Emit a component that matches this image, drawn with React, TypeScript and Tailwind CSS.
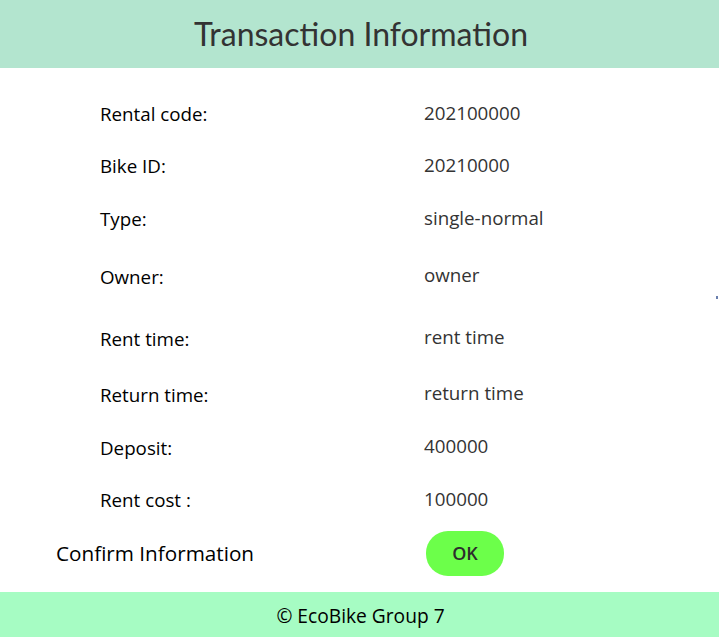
import { memo } from 'react'

interface Row {
  label: string
  value: string
  gap: string
  lift: string
}

const rows: Row[] = [
  { label: 'Rental code:', value: '202100000', gap: 'mt-[34px]', lift: '-mt-[1px]' },
  { label: 'Bike ID:', value: '20210000', gap: 'mt-[28px]', lift: '-mt-[1px]' },
  { label: 'Type:', value: 'single-normal', gap: 'mt-[29px]', lift: '-mt-[1px]' },
  { label: 'Owner:', value: 'owner', gap: 'mt-[34px]', lift: '-mt-[2px]' },
  { label: 'Rent time:', value: 'rent time', gap: 'mt-[38px]', lift: '-mt-[2px]' },
  { label: 'Return time:', value: 'return time', gap: 'mt-[32px]', lift: '-mt-[2px]' },
  { label: 'Deposit:', value: '400000', gap: 'mt-[29px]', lift: '-mt-[2px]' },
  { label: 'Rent cost :', value: '100000', gap: 'mt-[28px]', lift: '-mt-[1px]' },
]

const InfoRow = memo<Row>(({ label, value, gap, lift }) => (
  <div className={`${gap} flex items-start h-6`}>
    <span className="w-[424px] pl-[100px] text-[18.75px] leading-6 text-black">{label}</span>
    <span className={`${lift} text-[18.75px] leading-6 text-[#333333]`}>{value}</span>
  </div>
))

InfoRow.displayName = 'InfoRow'

export default function App() {
  return (
    <div
      className="relative w-[719px] h-[637px] bg-white flex flex-col overflow-hidden"
      style={{ fontFamily: '"Open Sans", "Noto Sans", sans-serif' }}
    >
      <header className="h-[68px] shrink-0 bg-[#b3e5cf] flex items-center justify-center">
        <h1
          className="text-[32px] leading-none text-[#333333] pl-[3px]"
          style={{ fontFamily: 'Lato, "Open Sans", sans-serif' }}
        >
          Transaction Information
        </h1>
      </header>

      <main className="flex-1 flex flex-col">
        {rows.map((row) => (
          <InfoRow key={row.label} {...row} />
        ))}

        {/* Confirm */}
        <div className="mt-[19px] flex items-center h-[45px]">
          <span className="w-[370px] pl-[56px] text-[20.7px] text-black">Confirm Information</span>
          <button className="ml-[56px] w-[78px] h-[45px] rounded-[22px] bg-[#6cff4a] text-[18px] font-semibold text-[#2d2d2d]">
            OK
          </button>
        </div>
      </main>

      <footer className="h-[45px] shrink-0 bg-[#a6fcc3] flex items-center justify-center pt-[3px]">
        <span className="text-[19.2px] text-black pl-[2px]">© EcoBike Group 7</span>
      </footer>

      {/* stray caret mark on the right edge */}
      <span className="absolute left-[716px] top-[296px] w-[2px] h-[3px] bg-[#6a7fae]" />
    </div>
  )
}
